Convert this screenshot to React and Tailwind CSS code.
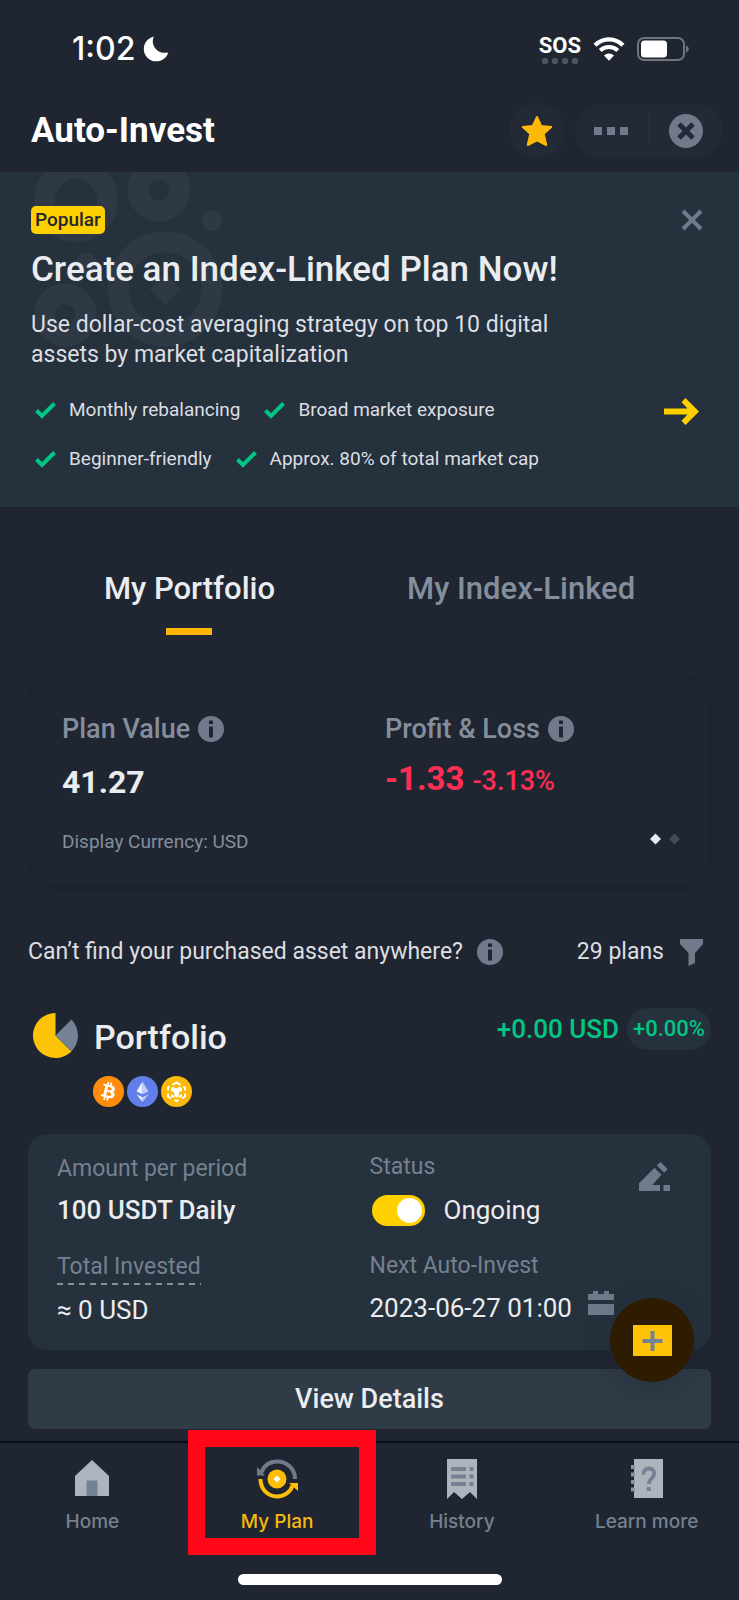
import { useState } from 'react';
import { FaBitcoin } from 'react-icons/fa';

const FEATURES = [
  ['Monthly rebalancing', 'Broad market exposure'],
  ['Beginner-friendly', 'Approx. 80% of total market cap'],
];

const TABS = [
  { key: 'portfolio', label: 'My Portfolio' },
  { key: 'index', label: 'My Index-Linked' },
];

function StatusBar() {
  return (
    <div className="flex h-[98px] items-center justify-between pr-[50px] pl-[72px] font-['Inter',sans-serif] text-white">
      <div className="flex items-center gap-2">
        <span className="text-[32px] leading-10 font-medium">1:02</span>
        <svg className="size-[26px]" viewBox="0 0 26 26" fill="currentColor">
          <path d="M10.800.6C9 5 9.600 9.500 12.800 12.900c3.100 3.300 7.800 4.600 12.400 3.500C23.600 21.700 18.900 25.300 13.300 25.300 6.300 25.300.8 19.800.8 12.900.8 7.300 5 2 10.800.6z" />
        </svg>
      </div>
      <div className="flex items-center gap-3">
        <div className="flex flex-col items-center">
          <span className="font-['Roboto',sans-serif] text-[22px] leading-6 font-bold">SOS</span>
          <div className="flex gap-1">
            {[0, 1, 2, 3].map(i => (
              <span key={i} className="size-[6px] rounded-xs bg-[#4c5460]" />
            ))}
          </div>
        </div>
        <svg className="h-6 w-8" viewBox="0 0 32 24" fill="none" stroke="currentColor">
          <path d="M2 8.200C5.800 4.400 10.700 2.300 16 2.300s10.200 2.100 14 5.900" strokeWidth="4.200" />
          <path d="M7.200 13.500c2.400-2.300 5.400-3.500 8.800-3.500s6.400 1.200 8.800 3.500" strokeWidth="4" />
          <path d="M11 18.500c1.400-1.300 3.100-2 5-2s3.600.7 5 2l-5 5.300z" fill="currentColor" stroke="none" />
        </svg>
        <svg className="h-6 w-[52px]" viewBox="0 0 52 24">
          <rect x="1" y="1" width="46" height="22" rx="6" fill="none" stroke="#6f7680" strokeWidth="2" />
          <rect x="4" y="3.500" width="26" height="17" rx="3.500" fill="#fff" />
          <path d="M49 8.500c2 .8 2.800 2 2.800 3.500s-.8 2.700-2.800 3.500z" fill="#6f7680" />
        </svg>
      </div>
    </div>
  );
}

function Header() {
  return (
    <header className="flex h-[74px] items-center justify-between pr-4 pb-2 pl-[31px]">
      <h1 className="text-[35px] leading-[44px] font-bold text-white">Auto-Invest</h1>
      <div className="flex items-center gap-[10px]">
        <button aria-label="Favourite" className="grid size-14 place-items-center rounded-full bg-[#232a35]">
          <svg className="size-8" viewBox="0 0 32 32" fill="#fcb90a" stroke="#fcb90a" strokeWidth="2" strokeLinejoin="round">
            <path d="M16 2l4.200 9 10 1-7.500 6.700 2.500 11.300-9.200-4.700-9.200 4.700 2.500-11.300L1.800 12l10-1z" />
          </svg>
        </button>
        <div className="flex h-[54px] items-center rounded-full bg-[#232a35] pr-5 pl-[19px]">
          <button aria-label="More" className="flex gap-[5px]">
            {[0, 1, 2].map(i => (
              <span key={i} className="size-2 bg-[#707a8a]" />
            ))}
          </button>
          <span className="mx-5 h-8 w-px bg-[#293140]" />
          <button aria-label="Close app">
            <svg className="size-[34px]" viewBox="0 0 34 34">
              <circle cx="17" cy="17" r="17" fill="#707a8a" />
              <path d="M10 10l14 14M24 10L10 24" stroke="#232a35" strokeWidth="5" />
            </svg>
          </button>
        </div>
      </div>
    </header>
  );
}

function Banner() {
  return (
    <section className="relative overflow-hidden bg-[#25313d] pt-[34px] pr-9 pb-[34px] pl-[31px] text-[#eaecef]">
      <svg className="absolute top-0 left-0 h-[180px] w-60" viewBox="0 0 240 180" fill="none" stroke="#2e3945">
        <circle cx="76" cy="28" r="31.500" strokeWidth="21" />
        <circle cx="159" cy="18" r="21" strokeWidth="21" />
        <circle cx="165" cy="117" r="47" strokeWidth="21" />
        <circle cx="65" cy="143" r="21" strokeWidth="21" />
        <circle cx="212" cy="49" r="10.500" fill="#2e3945" stroke="none" />
        <circle cx="86" cy="91" r="10.500" fill="#2e3945" stroke="none" />
        <path d="M165 101l15.500 16L165 133l-15.500-16z" fill="#2e3945" stroke="none" />
      </svg>
      <div className="relative">
        <div className="flex items-center justify-between">
          <span className="rounded-[5px] bg-[#ffd000] px-1 text-[19px] leading-7 font-medium text-[#1f2630]">Popular</span>
          <button aria-label="Dismiss">
            <svg className="size-[22px]" viewBox="0 0 22 22" stroke="#707a8a" strokeWidth="4">
              <path d="M2 2l18 18M20 2L2 20" />
            </svg>
          </button>
        </div>
        <h2 className="mt-[14px] text-[35px] leading-[44px] font-medium">Create an Index-Linked Plan Now!</h2>
        <p className="mt-[18px] max-w-[540px] text-[23px] leading-[30px] text-[#dcdee2]">
          Use dollar-cost averaging strategy on top 10 digital assets by market capitalization
        </p>
        <div className="mt-[26px] flex items-start justify-between pr-1">
          <div className="flex flex-col gap-[21px] pl-1">
            {FEATURES.map(row => (
              <ul key={row[0]} className="flex gap-6">
                {row.map(text => (
                  <li key={text} className="flex items-center gap-[13px] text-[19px] leading-7 text-[#dcdee2]">
                    <svg className="h-[17px] w-[21px]" viewBox="0 0 21 17" fill="none" stroke="#02c684" strokeWidth="4">
                      <path d="M1.500 8.500L7 14 19.500 1.500" />
                    </svg>
                    {text}
                  </li>
                ))}
              </ul>
            ))}
          </div>
          <a href="#create" aria-label="Create a plan" className="mt-[2px]">
            <svg className="h-[27px] w-[35px]" viewBox="0 0 35 27">
              <path d="M0 10.500h23.500L17.500 4.300 21.500 0 35 13.500 21.500 27l-4-4.300 6-6.200H0z" fill="#ffd000" />
            </svg>
          </a>
        </div>
      </div>
    </section>
  );
}

function InfoIcon() {
  return (
    <svg className="size-[26px] shrink-0" viewBox="0 0 26 26">
      <circle cx="13" cy="13" r="13" fill="#707a8a" />
      <path d="M11 4.500h4V8h-4zM11 10.500h4v11h-4z" fill="#1f2630" />
    </svg>
  );
}

function Summary() {
  return (
    <section className="mx-[25px] mt-[38px] grid grid-cols-2 rounded-[36px] border-[6px] border-[#1d242e] pt-[34px] pb-[29px] pl-[31px] text-[#848e9c]">
      <div>
        <h3 className="flex items-center gap-2 text-[27px] leading-8 font-medium">Plan Value <InfoIcon /></h3>
        <p className="mt-[15px] text-[32px] leading-[44px] font-bold text-[#eaecef]">41.27</p>
        <p className="mt-6 text-[19px] leading-7">Display Currency: USD</p>
      </div>
      <div>
        <h3 className="flex items-center gap-2 text-[27px] leading-8 font-medium">Profit &amp; Loss <InfoIcon /></h3>
        <p className="mt-3 flex items-baseline gap-2 text-[33px] leading-[44px] font-bold text-[#ff2e55]">
          -1.33 <span className="text-[27px] font-medium">-3.13%</span>
        </p>
        <div className="mt-[30px] flex justify-end pr-7">
          <svg className="h-3 w-[30px]" viewBox="0 0 30 12">
            <path d="M5.500.5L11 6l-5.500 5.500L0 6z" fill="#eaecef" />
            <path d="M24.500.5L30 6l-5.500 5.500L19 6z" fill="#424b57" />
          </svg>
        </div>
      </div>
    </section>
  );
}

function Coins() {
  return (
    <div className="mt-[15px] flex gap-[3px] pl-[65px]">
      <FaBitcoin className="size-[31px] rounded-full bg-[radial-gradient(circle,white_55%,#ff8c0a_56%)] text-[#ff8c0a]" />
      <svg className="size-[31px]" viewBox="0 0 31 31">
        <circle cx="15.500" cy="15.500" r="15.500" fill="#627eea" />
        <path d="M15.500 5.500v12.800l-6-2.900z" fill="#f1f3fc" />
        <path d="M15.500 5.500l6 9.900-6 2.900z" fill="#c2cdf5" />
        <path d="M9.500 18.300l6 3v4.700z" fill="#f1f3fc" />
        <path d="M21.500 18.300l-6 3v4.700z" fill="#c2cdf5" />
      </svg>
      <svg className="size-[31px]" viewBox="0 0 31 31">
        <circle cx="15.500" cy="15.500" r="15.500" fill="#fcb90a" />
        <path
          d="M11.500 8.800l4-2.300 4 2.300M8.500 10.500l-1.500 1v3M22.500 10.500l1.500 1v3M7 17.500v3l3 1.800M24 17.500v3l-3 1.800M13.500 23.800l2 1.200 2-1.200M11 18.500v1.500l2 1.200M20 18.500v1.500l-2 1.200"
          fill="none" stroke="#fff" strokeWidth="2"
        />
        <path d="M10 12l2.300-1.300 3.200 1.800 3.200-1.800L21 12v2.700l-3.200 1.900v3.600l-2.300 1.400-2.300-1.400v-3.600L10 14.700z" fill="#fff" />
      </svg>
    </div>
  );
}

function PlanCard() {
  const [active, setActive] = useState(true);

  return (
    <div className="mt-[27px] grid grid-cols-2 rounded-[20px] bg-[#25313d] px-[29px] pb-[22px] text-[26px] leading-9 text-[#eaecef]">
      <div className="pt-[19px]">
        <div className="text-[23px] leading-8 text-[#76808f]">Amount per period</div>
        <div className="mt-[7px] font-medium">100 USDT Daily</div>
        <div className="mt-[23px] flex">
          <div className="text-[23px] leading-8 text-[#76808f]">
            Total Invested
            <svg className="block h-[2px] w-0 min-w-full">
              <path d="M0 1h400" stroke="#848e9c" strokeWidth="2" strokeDasharray="6 5" />
            </svg>
          </div>
        </div>
        <div className="mt-[7px]">≈ 0 USD</div>
      </div>
      <div className="pt-[17px]">
        <div className="flex h-8 items-start justify-between">
          <label htmlFor="status" className="text-[23px] leading-8 text-[#76808f]">Status</label>
          <button aria-label="Edit plan" className="mt-[11px] mr-3">
            <svg className="h-[29px] w-[31px]" viewBox="0 0 31 29" fill="#707a8a">
              <path d="M15.500 5.800l7 7L13.300 23H21v6H0v-7.700z" />
              <path d="M21.500 0l7.200 7.200-3.600 3.600-7.200-7.200zM24.500 23H31v6h-6.500z" />
            </svg>
          </button>
        </div>
        <div className="mt-[9px] flex items-center gap-[19px]">
          <input
            id="status"
            type="checkbox"
            role="switch"
            checked={active}
            onChange={e => setActive(e.target.checked)}
            className="ml-[2px] h-[31px] w-[53px] cursor-pointer appearance-none rounded-full bg-[#474d57] p-[3px] before:block before:size-[25px] before:rounded-full before:bg-white checked:bg-[#ffd000] checked:before:ml-[22px]"
          />
          Ongoing
        </div>
        <div className="mt-[22px] text-[23px] leading-8 text-[#76808f]">Next Auto-Invest</div>
        <div className="mt-2 flex items-start gap-4">
          <span>2023-06-27 01:00</span>
          <svg className="h-[26px] w-[26px]" viewBox="0 0 26 26" fill="#707a8a">
            <path d="M0 4h5V1h5v3h6V1h5v3h5v6H0zM0 14h26v11H0z" />
          </svg>
        </div>
      </div>
    </div>
  );
}

function HomeIcon() {
  return (
    <svg className="size-10" viewBox="0 0 40 40">
      <path d="M20 1l17 16v20H3V17z" fill="#adb4bd" />
      <path d="M14.500 21.500h11V37h-11z" fill="#758194" />
    </svg>
  );
}

function PlanIcon() {
  return (
    <svg className="h-10 w-[42px]" viewBox="0 0 42 40" fill="none">
      <circle cx="21" cy="20" r="9.500" fill="#fdbe08" />
      <path d="M21 16.500l3.500 3.500-3.500 3.500-3.500-3.500z" fill="#fff" />
      <path d="M5 14C8 6.500 14 2.500 21 2.500c9.500 0 18 7 18 17.500" stroke="#707a8a" strokeWidth="4" />
      <path d="M1 8v8.500h8z" fill="#707a8a" />
      <path d="M4.500 20c0 10.500 7.500 17.500 16.500 17.500 7.500 0 13.500-4.500 15.500-11" stroke="#fdbe08" strokeWidth="4" />
      <path d="M33 24h9v8z" fill="#fdbe08" />
    </svg>
  );
}

function HistoryIcon() {
  return (
    <svg className="h-10 w-8" viewBox="0 0 32 40">
      <path d="M1 0h30v40l-7-7-8 7-8-7-7 7z" fill="#adb4bd" />
      <path d="M5 8h15v4H5zM23.500 8h4v4h-4zM5 15.500h15v4H5zM23.500 15.500h4v4h-4zM5 23h15v4H5zM23.500 23h4v4h-4z" fill="#758194" />
    </svg>
  );
}

function LearnIcon() {
  return (
    <svg className="h-10 w-8" viewBox="0 0 32 40">
      <path d="M3 0h29v39H3z" fill="#adb4bd" />
      <path d="M0 6h4v4H0zM0 13.500h4v4H0zM0 21h4v4H0zM0 28.500h4v4H0z" fill="#8b94a0" />
      <path d="M12.500 15.500c0-4 2-6 5.300-6s5.400 2 5.400 5.300c0 4.200-5.400 4.700-5.400 10.200" fill="none" stroke="#758194" strokeWidth="3.800" />
      <path d="M15.700 28h4.200v4h-4.200z" fill="#758194" />
    </svg>
  );
}

const NAV_ITEMS = [
  { label: 'Home', Icon: HomeIcon },
  { label: 'My Plan', Icon: PlanIcon, current: true },
  { label: 'History', Icon: HistoryIcon },
  { label: 'Learn more', Icon: LearnIcon },
];

function BottomNav() {
  return (
    <nav className="mt-3 border-t-2 border-[#070d1e] pt-4">
      <div className="grid grid-cols-4">
        {NAV_ITEMS.map(({ label, Icon, current }) => (
          <a
            key={label}
            href="#nav"
            className={`relative flex flex-col items-center gap-[11px] font-['Inter',sans-serif] text-[19px] leading-6 font-medium ${
              current ? 'text-[#f7b90c]' : 'text-[#76808f]'
            }`}
          >
            <Icon />
            {label}
            {current && (
              <span className="pointer-events-none absolute -top-[29px] -right-[6px] -bottom-[21px] left-[3px] border-[17px] border-[#ff0719]" />
            )}
          </a>
        ))}
      </div>
      <div className="mx-auto mt-10 mb-[13px] h-[11px] w-[264px] rounded-full bg-white" />
    </nav>
  );
}

export default function App() {
  const [tab, setTab] = useState('portfolio');

  return (
    <div className="min-h-screen bg-[#1f2631] font-['Roboto',sans-serif] text-[#eaecef]">
      <StatusBar />
      <Header />
      <Banner />

      {/* Tabs */}
      <div className="mt-[62px] flex justify-center gap-[132px]">
        {TABS.map(t => (
          <button
            key={t.key}
            onClick={() => setTab(t.key)}
            className={`flex cursor-pointer flex-col items-center gap-[19px] text-[31px] leading-10 font-medium ${
              tab === t.key ? 'text-[#eaecef]' : 'text-[#848e9c]'
            }`}
          >
            {t.label}
            <span className={`h-[7px] w-[46px] ${tab === t.key ? 'bg-[#fcb500]' : ''}`} />
          </button>
        ))}
      </div>

      <Summary />

      <main className="relative mt-[45px] px-7">
        <div className="flex items-center justify-between pr-2 text-[23px] leading-8 text-[#dcdee2]">
          <div className="flex items-center gap-[14px]">Can’t find your purchased asset anywhere? <InfoIcon /></div>
          <div className="flex items-center gap-4">
            29 plans
            <button aria-label="Filter plans">
              <svg className="block h-[27px] w-[23px]" viewBox="0 0 23 27" fill="#707a8a">
                <path d="M0 0h23v5l-8 9v10l-6.500 3V14L0 5z" />
              </svg>
            </button>
          </div>
        </div>

        <div className="mt-10 flex items-start justify-between">
          <div className="flex items-start gap-4 pt-[5px] pl-[5px]">
            <svg className="size-[45px]" viewBox="0 0 45 45">
              <path d="M22.500 0A22.500 22.500 0 1 0 38.400 38.400L22.500 22.500z" fill="#fdc306" />
              <path d="M38.400 6.600a22.500 22.500 0 0 1 0 31.800L22.500 22.500z" fill="#758194" />
            </svg>
            <h2 className="text-[34px] leading-[48px] font-medium">Portfolio</h2>
          </div>
          <div className="flex items-center gap-2 font-medium text-[#02c684]">
            <span className="text-[26px] leading-8">+0.00 USD</span>
            <span className="rounded-full bg-[#25313d] px-[6px] text-[22px] leading-[42px]">+0.00%</span>
          </div>
        </div>
        <Coins />

        <PlanCard />
        <button className="mt-[19px] h-[60px] w-full cursor-pointer rounded-[7px] bg-[#2f3b47] text-[27px] leading-9 font-medium">
          View Details
        </button>
        <button
          aria-label="Add plan"
          className="absolute right-[45px] bottom-[47px] grid size-[84px] cursor-pointer place-items-center rounded-full bg-[#2e1c00] shadow-[0_8px_28px_rgba(31,38,48,0.35)]"
        >
          <svg className="h-[31px] w-[39px]" viewBox="0 0 39 31">
            <path d="M0 0h39v31H0z" fill="#fdc306" />
            <path d="M17.500 6h4v8h8v4h-8v8h-4v-8h-8v-4h8z" fill="#758194" />
          </svg>
        </button>
      </main>

      <BottomNav />
    </div>
  );
}
